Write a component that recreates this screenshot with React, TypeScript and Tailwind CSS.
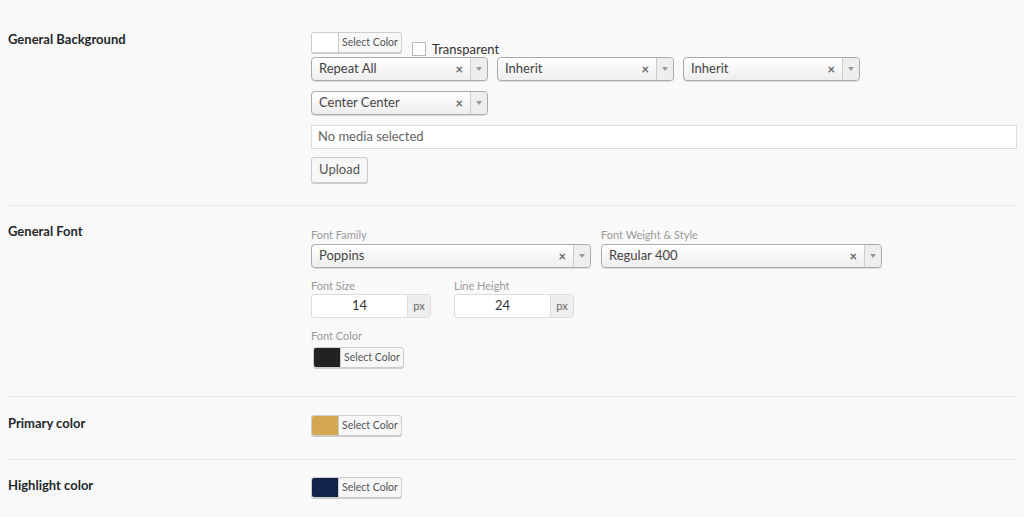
import React from 'react';

const font = { fontFamily: 'Lato, "Noto Sans", sans-serif' };

function ColorButton({ swatch, className = '' }: { swatch: string; className?: string }) {
  return (
    <div
      className={`flex h-[21px] w-[91px] overflow-hidden rounded-[3px] border border-[#cccccc] bg-[#f7f7f7] shadow-[0_1px_0_#cccccc] ${className}`}
    >
      <div className={`w-[27px] border-r border-[#cccccc] ${swatch}`} />
      <div className="flex flex-1 items-center justify-center text-[10.5px] text-[#555]">Select Color</div>
    </div>
  );
}

function Select({ value, width }: { value: string; width: string }) {
  return (
    <div
      className={`flex h-[24px] items-center rounded-[4px] border border-[#aaaaaa] bg-gradient-to-b from-white to-[#eeeeee] shadow-[0_1px_0_#dddddd] ${width}`}
    >
      <span className="flex-1 truncate pl-[7px] text-[13px] text-[#444]">{value}</span>
      <span className="mr-[7px] text-[13px] font-bold leading-none text-[#666]">×</span>
      <span className="flex h-full w-[17px] items-center justify-center rounded-r-[4px] border-l border-[#cccccc] bg-[#eeeeee]">
        <svg width="6" height="4" viewBox="0 0 6 4">
          <path d="M0 0h6L3 4z" fill="#999" />
        </svg>
      </span>
    </div>
  );
}

function UnitInput({ value }: { value: string }) {
  return (
    <div className="flex h-[24px] w-[120px] rounded-[3px] border border-[#dddddd] bg-white">
      <div className="flex flex-1 items-center justify-center text-[13px] text-[#333]">{value}</div>
      <div className="flex w-[23px] items-center justify-center border-l border-[#dddddd] bg-[#eeeeee] text-[11px] text-[#666]">
        px
      </div>
    </div>
  );
}

function Label({ text }: { text: string }) {
  return <div className="text-[11px] leading-[14px] text-[#999]">{text}</div>;
}

function Row({ label, labelTop, children }: { label: string; labelTop: string; children: React.ReactNode }) {
  return (
    <div className="flex items-start">
      <div className={`w-[303px] shrink-0 text-[13px] font-bold leading-5 text-[#23282d] ${labelTop}`}>{label}</div>
      <div className="flex-1">{children}</div>
    </div>
  );
}

export default function App() {
  return (
    <div className="h-[517px] w-full overflow-hidden bg-[#f9f9f9] pl-2 pr-[7px]" style={font}>
      {/* General Background */}
      <Row label="General Background" labelTop="pt-[29px]">
        <div className="pt-[32px] pb-[22px]">
          <div className="flex h-[25px] items-start">
            <ColorButton swatch="bg-white" className="h-[20px] w-[90px]" />
            <div className="ml-[10px] mt-[10px] h-[14px] w-[14px] border border-[#b4b9be] bg-white" />
            <span className="ml-[6px] mt-[9px] text-[13px] leading-[16px] text-[#333]">Transparent</span>
          </div>
          <div className="flex gap-[9px]">
            <Select value="Repeat All" width="w-[177px]" />
            <Select value="Inherit" width="w-[177px]" />
            <Select value="Inherit" width="w-[177px]" />
          </div>
          <div className="mt-[10px]">
            <Select value="Center Center" width="w-[177px]" />
          </div>
          <div className="mt-[10px] flex h-[24px] items-center border border-[#dddddd] bg-white pl-[6px] text-[13px] text-[#666]">
            No media selected
          </div>
          <button className="mt-[8px] h-[26px] w-[57px] rounded-[3px] border border-[#cccccc] bg-[#f7f7f7] text-[13px] text-[#555] shadow-[0_1px_0_#cccccc]">
            Upload
          </button>
        </div>
      </Row>
      <div className="h-px bg-[#e8e8e8]" />

      {/* General Font */}
      <Row label="General Font" labelTop="pt-[15px]">
        <div className="pt-[22px] pb-[28px]">
          <div className="flex gap-[10px]">
            <div>
              <Label text="Font Family" />
              <div className="mt-[2px]">
                <Select value="Poppins" width="w-[280px]" />
              </div>
            </div>
            <div>
              <Label text="Font Weight & Style" />
              <div className="mt-[2px]">
                <Select value="Regular 400" width="w-[281px]" />
              </div>
            </div>
          </div>
          <div className="mt-[11px] flex gap-[23px]">
            <div>
              <Label text="Font Size" />
              <div className="mt-[1px]">
                <UnitInput value="14" />
              </div>
            </div>
            <div>
              <Label text="Line Height" />
              <div className="mt-[1px]">
                <UnitInput value="24" />
              </div>
            </div>
          </div>
          <div className="mt-[11px]">
            <Label text="Font Color" />
            <ColorButton swatch="bg-[#222222]" className="ml-[2px] mt-[4px]" />
          </div>
        </div>
      </Row>
      <div className="h-px bg-[#e8e8e8]" />

      {/* Primary color */}
      <Row label="Primary color" labelTop="pt-[16px]">
        <div className="pt-[18px] pb-[23px]">
          <ColorButton swatch="bg-[#d4a751]" />
        </div>
      </Row>
      <div className="h-px bg-[#e8e8e8]" />

      {/* Highlight color */}
      <Row label="Highlight color" labelTop="pt-[15px]">
        <div className="pt-[17px] pb-[22px]">
          <ColorButton swatch="bg-[#13244a]" />
        </div>
      </Row>
    </div>
  );
}
